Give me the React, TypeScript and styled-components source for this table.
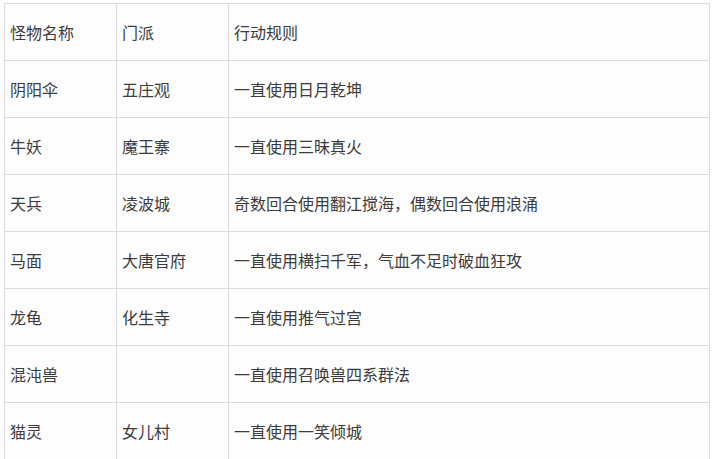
import React from 'react';
import styled, { createGlobalStyle } from 'styled-components';

const GlobalStyle = createGlobalStyle`
  html, body {
    margin: 0;
    padding: 0;
    background: #ffffff;
  }
  body {
    font-family: "Noto Sans CJK SC", "Noto Sans", sans-serif;
    color: #333;
  }
`;

interface MonsterRow {
  name: string;
  sect: string;
  rule: string;
}

const rows: MonsterRow[] = [
  { name: '阴阳伞', sect: '五庄观', rule: '一直使用日月乾坤' },
  { name: '牛妖', sect: '魔王寨', rule: '一直使用三昧真火' },
  { name: '天兵', sect: '凌波城', rule: '奇数回合使用翻江搅海，偶数回合使用浪涌' },
  { name: '马面', sect: '大唐官府', rule: '一直使用横扫千军，气血不足时破血狂攻' },
  { name: '龙龟', sect: '化生寺', rule: '一直使用推气过宫' },
  { name: '混沌兽', sect: '', rule: '一直使用召唤兽四系群法' },
  { name: '猫灵', sect: '女儿村', rule: '一直使用一笑倾城' },
];

const Page = styled.div`
  padding: 3px 4px 0 4px;
  height: 459px;
  overflow: hidden;
  box-sizing: border-box;
`;

const Table = styled.table`
  width: 706px;
  border-collapse: collapse;
  table-layout: fixed;
  background: #fdfdfd;
`;

const Cell = styled.td<{ $width?: number }>`
  width: ${(p) => (p.$width ? `${p.$width}px` : 'auto')};
  height: 57px;
  padding: 0 5px;
  border: 1px solid #dcdcdc;
  font-size: 16px;
  line-height: 20px;
  color: #3c3c3c;
  vertical-align: middle;
  white-space: nowrap;
  box-sizing: border-box;
`;

export default function App() {
  return (
    <>
      <GlobalStyle />
      <Page>
        <Table>
          <tbody>
            <tr>
              <Cell $width={112}>怪物名称</Cell>
              <Cell $width={112}>门派</Cell>
              <Cell>行动规则</Cell>
            </tr>
            {rows.map((r) => (
              <tr key={r.name}>
                <Cell>{r.name}</Cell>
                <Cell>{r.sect}</Cell>
                <Cell>{r.rule}</Cell>
              </tr>
            ))}
          </tbody>
        </Table>
      </Page>
    </>
  );
}
